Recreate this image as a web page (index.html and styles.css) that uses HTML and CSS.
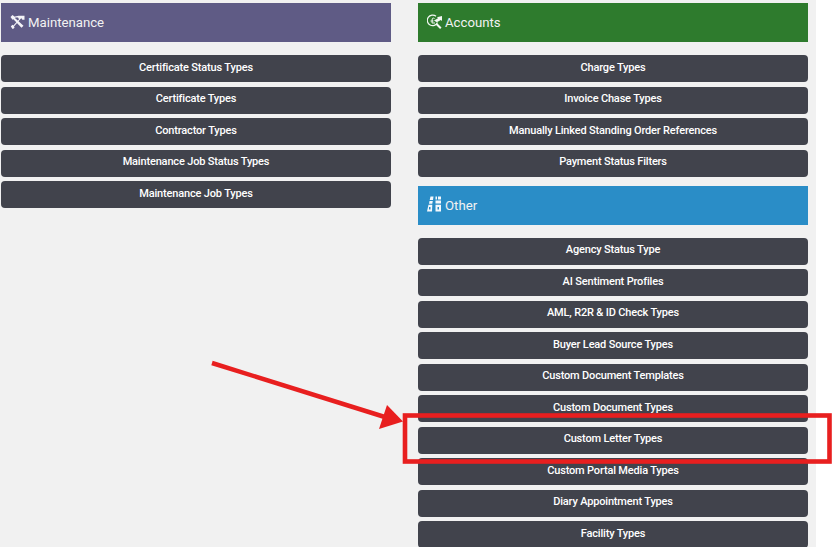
FILE: index.html
```html
<!DOCTYPE html>
<html lang="en">
<head>
<meta charset="utf-8">
<title>Maintenance types</title>
<link rel="stylesheet" href="styles.css">
</head>
<body>
<main class="page">
  <section class="col">
    <h2 class="head purple"><svg class="ico" viewBox="0 0 15 15"><path d="M0.500 3l2-2 3 2.200-.6.8 8.600 7.800-2 2L3.400 5.300l-.9.5z" fill="#f4f4f8"/><path d="M5 2.500l3.500-.8h6v4h-2.200l-.8-1.500-.8.6-6.700 7.700.6 1-1.800 1.700L0.800 12.500l1.600-1.700 1 .6L9 5.300l-1-1.800H5z" fill="#f4f4f8"/></svg>Maintenance</h2>
    <a class="btn">Certificate Status Types</a>
    <a class="btn">Certificate Types</a>
    <a class="btn">Contractor Types</a>
    <a class="btn">Maintenance Job Status Types</a>
    <a class="btn">Maintenance Job Types</a>
  </section>
  <section class="col">
    <h2 class="head green"><svg class="ico" viewBox="0 0 15 15"><path d="M9 2.300A5.300 5.300 0 1 0 10.500 8.500" fill="none" stroke="#f4f8f4" stroke-width="1.200"/><path d="M9.500 10l4.300 4.300" stroke="#f4f8f4" stroke-width="2"/><path d="M7 6.500l4-2.200-1-1 5-1.300v5l-1.200-1-4 2.300z" fill="#f4f8f4"/><path d="M7.500 4.500C6 3.500 4.700 4.500 5.200 6L5 9h3M3.500 7h3" fill="none" stroke="#f4f8f4" stroke-width="1"/></svg>Accounts</h2>
    <a class="btn">Charge Types</a>
    <a class="btn">Invoice Chase Types</a>
    <a class="btn">Manually Linked Standing Order References</a>
    <a class="btn">Payment Status Filters</a>
    <h2 class="head blue"><svg class="ico tall" viewBox="0 0 15 16"><path d="M3.500 0.500h3l-.5 3.500H2.700zM2.500 5h3.300l-.5 2.700H2zM1.500 8.700h3.800L5 15.500H0zM8.500 0.500H10v3H8.500zM11 0.500h3v3h-3zM8.500 4.500H14V7.500H8.500zM8.500 8.700H14V15.500H8.500z" fill="#f4f8fc"/><path d="M2 11h1.500v2.500H2zM10.500 11H12v2.500h-1.500z" fill="#2a8dc7"/></svg>Other</h2>
    <a class="btn">Agency Status Type</a>
    <a class="btn">AI Sentiment Profiles</a>
    <a class="btn">AML, R2R &amp; ID Check Types</a>
    <a class="btn">Buyer Lead Source Types</a>
    <a class="btn">Custom Document Templates</a>
    <a class="btn">Custom Document Types</a>
    <a class="btn">Custom Letter Types</a>
    <a class="btn">Custom Portal Media Types</a>
    <a class="btn">Diary Appointment Types</a>
    <a class="btn">Facility Types</a>
  </section>
</main>
<svg class="mark" viewBox="0 0 832 547" aria-hidden="true">
  <path d="M212 363L388 418" stroke="#e81f1f" stroke-width="4.500" fill="none"/>
  <path d="M403 421.500L387 405L379 429z" fill="#e81f1f"/>
  <rect x="405" y="415.500" width="424.500" height="46" fill="none" stroke="#e81f1f" stroke-width="4.600"/>
</svg>
</body>
</html>
```
FILE: styles.css
```css
html, body { margin: 0; height: 100%; background: #fff; overflow: hidden; }
.page {
  width: 816px; height: 547px; box-sizing: border-box; background: #f1f1f1;
  padding: 3px 8px 0 1px; display: flex; gap: 27px; overflow: hidden;
  font-family: Roboto, "Noto Sans", sans-serif;
}
.col { width: 390px; flex: none; display: flex; flex-direction: column; }
.head {
  margin: 0 0 13px; height: 39px; flex: none; display: flex; align-items: center; gap: 3px;
  padding: 0 0 0 9px; box-sizing: border-box; color: #f2f2f2;
  font-size: 13.2px; font-weight: 400;
}
.btn + .head { margin-top: 5px; margin-bottom: 13px; height: 38.5px; }
.ico { width: 15px; height: 15px; flex: none; margin-top: -3px; }
.ico.tall { height: 16px; margin-top: -2px; }
.purple { background: #5f5b85; }
.green { background: #2e7b2d; }
.blue { background: #2a8dc7; }
.btn {
  height: 27px; flex: none; margin-bottom: 4.5px; border-radius: 4px; background: #41434c;
  box-sizing: border-box; padding-top: 0.5px;
  color: #fff; font-size: 11px; font-weight: 500; letter-spacing: -0.17px; line-height: 24px; text-align: center;
}
.mark { position: absolute; left: 0; top: 0; width: 832px; height: 547px; pointer-events: none; }
```
